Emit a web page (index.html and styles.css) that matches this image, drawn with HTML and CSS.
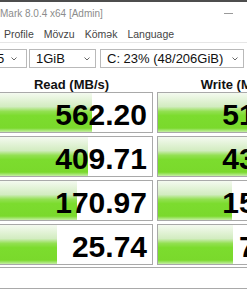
FILE: index.html
```html
<!DOCTYPE html>
<html lang="en">
  <head>
    <meta charset="UTF-8" />
    <meta name="viewport" content="width=device-width, initial-scale=1.0" />
    <title>CrystalDiskMark</title>
    <link rel="stylesheet" href="styles.css">
  </head>
  <body>
    <header class="titlebar">
      <span class="title">Mark 8.0.4 x64 [Admin]</span>
      <span class="minimize"></span>
    </header>
    <nav class="menubar">
      <span>Profile</span>
      <span>Mövzu</span>
      <span>Kömək</span>
      <span>Language</span>
    </nav>
    <div class="combos">
      <div class="combo combo-count">
        <span>5</span>
        <svg width="6" height="4" viewBox="0 0 6 4"><polyline points="0.5,0.5 3,3 5.5,0.5" /></svg>
      </div>
      <div class="combo combo-size">
        <span>1GiB</span>
        <svg width="6" height="4" viewBox="0 0 6 4"><polyline points="0.5,0.5 3,3 5.5,0.5" /></svg>
      </div>
      <div class="combo combo-drive">
        <span>C: 23% (48/206GiB)</span>
        <svg width="6" height="4" viewBox="0 0 6 4"><polyline points="0.5,0.5 3,3 5.5,0.5" /></svg>
      </div>
    </div>
    <div class="results">
      <div class="head">Read (MB/s)</div>
      <div class="head">Write (MB/s)</div>

      <div class="cell"><div class="bar" style="width: 101px"></div><div class="value">562.20</div></div>
      <div class="cell"><div class="bar" style="width: 100px"></div><div class="value">519.68</div></div>

      <div class="cell"><div class="bar" style="width: 97px"></div><div class="value">409.71</div></div>
      <div class="cell"><div class="bar" style="width: 96px"></div><div class="value">431.27</div></div>

      <div class="cell"><div class="bar" style="width: 86px"></div><div class="value">170.97</div></div>
      <div class="cell"><div class="bar" style="width: 74px"></div><div class="value">152.84</div></div>

      <div class="cell"><div class="bar" style="width: 66px"></div><div class="value">25.74</div></div>
      <div class="cell"><div class="bar" style="width: 75px"></div><div class="value">73.51</div></div>
    </div>
    <div class="comment"></div>
  </body>
</html>
```

FILE: styles.css
```css
html,
body {
  margin: 0;
  width: 247px;
  height: 296px;
  overflow: hidden;
  background-color: #fff;
  font-family: "Liberation Sans", Arial, sans-serif;
}

.titlebar {
  height: 23px;
  border-top: 2px solid #4d4d4d;
  display: flex;
  align-items: center;
  justify-content: space-between;
}

.title {
  font-size: 10px;
  color: #8c8c8c;
}

.minimize {
  width: 9px;
  height: 1px;
  background-color: #9a9a9a;
  margin-right: 14px;
}

.menubar {
  height: 17px;
  border-bottom: 1px solid #e6e6e6;
  display: flex;
  align-items: center;
  gap: 10px;
  padding-left: 4px;
  font-size: 10.5px;
  color: #444;
}

.combos {
  display: flex;
  gap: 2px;
  margin-top: 6px;
  margin-left: -30px;
}

.combo {
  height: 17px;
  border: 1px solid #b9b9b9;
  background-color: #fff;
  display: flex;
  align-items: center;
  justify-content: space-between;
  padding: 0 5px 0 6px;
  font-size: 13px;
  color: #111;
}

.combo svg {
  fill: none;
  stroke: #666;
  stroke-width: 1;
}

.combo-count {
  width: 20px;
  padding-left: 26px;
  padding-right: 9px;
}

.combo-size {
  width: 54px;
}

.combo-drive {
  width: 131px;
  margin-left: 2px;
}

.results {
  display: grid;
  grid-template-columns: 163px 163px;
  column-gap: 4px;
  row-gap: 3px;
  margin-left: -10px;
  width: 330px;
}

.head {
  height: 15px;
  padding-top: 9px;
  line-height: 15px;
  font-size: 13px;
  font-weight: bold;
  text-align: center;
  color: #111;
  margin-bottom: -3px;
}

.cell {
  height: 39px;
  border: 1px solid #a9a9a9;
  background-color: #fff;
  display: grid;
}

.bar,
.value {
  grid-area: 1 / 1;
}

.bar {
  height: 39px;
  background: linear-gradient(
    to bottom,
    #f4faf0 0%,
    #d2ecc0 35%,
    #93e052 47%,
    #7cdc2e 58%,
    #7ad92c 90%,
    #c6efa6 100%
  );
}

.value {
  padding: 4px 5px 0 0;
  line-height: 35px;
  font-size: 30px;
  font-weight: bold;
  text-align: right;
  color: #000;
}

.comment {
  height: 20px;
  margin-top: 2px;
  border-top: 1px solid #a9a9a9;
  border-bottom: 1px solid #a9a9a9;
}
```
